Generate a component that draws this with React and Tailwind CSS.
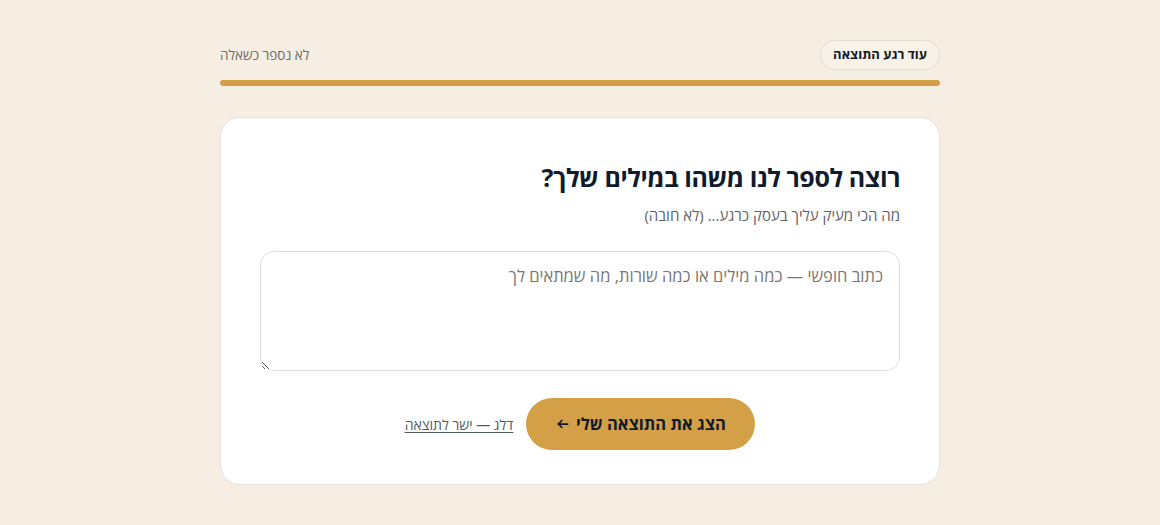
export default function App() {
  return (
    <div dir="rtl" className="min-h-[525px] w-full bg-[#f6eee2] font-['Open_Sans',sans-serif]">
      <div className="mx-auto w-[720px] pt-10">
        <div className="flex items-center justify-between">
          <button className="h-[30px] rounded-full border border-[#e3dccf] bg-[#f8f2e9] px-3 text-[13px] font-bold text-[#111827]">עוד רגע התוצאה</button>
          <span className="text-[13.5px] text-[#6b6b6b]">לא נספר כשאלה</span>
        </div>
        <div className="mt-[10px] h-[6px] rounded-full bg-[#d4a047]"></div>
        <div className="mt-[31px] rounded-[20px] border border-[#e5e2dd] bg-white px-[39px] pt-[41px] pb-[34px]">
          <h1 className="text-[25px] font-bold leading-[36px] tracking-[-0.4px] text-[#0f1b2d]">רוצה לספר לנו משהו במילים שלך?</h1>
          <p className="mt-[9px] text-[15px] leading-[22px] text-[#5f6368]">מה הכי מעיק עליך בעסק כרגע... (לא חובה)</p>
          <textarea
            className="mt-[25px] block h-[120px] w-full resize-y rounded-[14px] border border-[#dedede] px-4 py-[12px] text-[16.5px] outline-none placeholder:text-[#777]"
            placeholder="כתוב חופשי — כמה מילים או כמה שורות, מה שמתאים לך"
          ></textarea>
          <div className="mt-[27px] flex items-center justify-center gap-[13px]">
            <button className="flex h-[52px] w-[229px] items-center justify-center gap-1.5 rounded-full bg-[#d4a047] text-[16.5px] font-bold text-[#0f1b2d]">
              <span>הצג את התוצאה שלי</span>
              <svg width="14" height="14" viewBox="0 0 24 24" fill="none" stroke="currentColor" strokeWidth="3" strokeLinecap="round" strokeLinejoin="round">
                <path d="M20 12H4" />
                <path d="M10 6l-6 6 6 6" />
              </svg>
            </button>
            <a className="text-[14px] text-[#555b66] underline underline-offset-2">דלג — ישר לתוצאה</a>
          </div>
        </div>
      </div>
    </div>
  );
}
